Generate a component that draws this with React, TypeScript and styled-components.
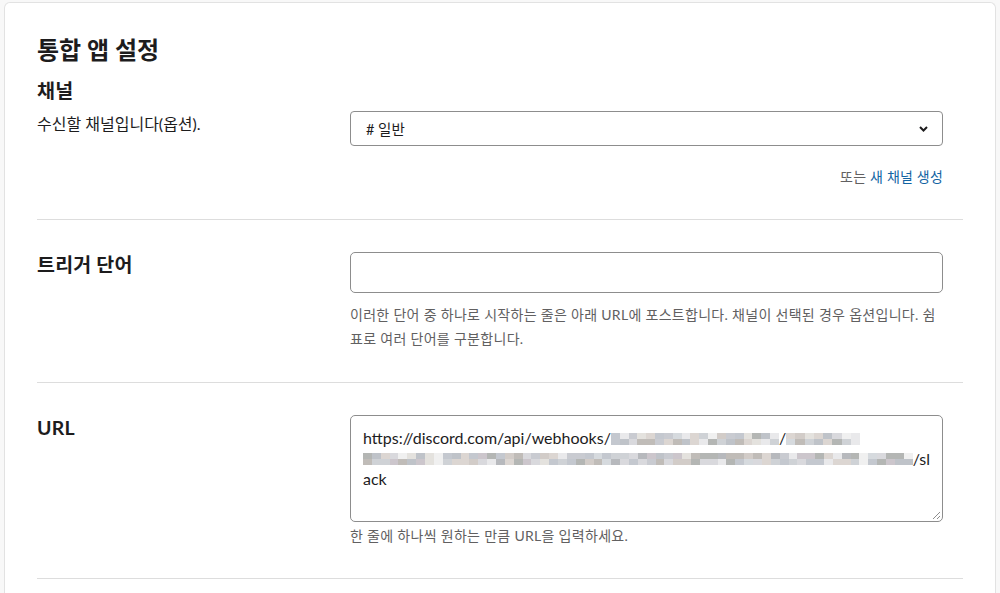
import React from "react";
import styled, { createGlobalStyle } from "styled-components";

const GlobalStyle = createGlobalStyle`
  body {
    margin: 0;
    background-color: #f8f8f8;
    font-family: Lato, "Noto Sans CJK KR", sans-serif;
    color: #1d1c1d;
  }
`;

const Card = styled.div`
  margin: 2px 4px 0;
  background-color: #ffffff;
  border: 1px solid #e2e2e2;
  border-bottom: none;
  border-radius: 6px 6px 0 0;
  padding: 31px 32px 40px;
  min-height: 600px;
`;

const Title = styled.h1`
  font-size: 24px;
  line-height: 32px;
  font-weight: 700;
  margin: 0 0 12px;
`;

const Label = styled.h2`
  font-size: 19.5px;
  line-height: 26px;
  font-weight: 700;
  margin: 0;
  letter-spacing: 0.2px;
`;

const Section = styled.section<{ $top?: number; $bottom?: number }>`
  padding: ${(p) => p.$top ?? 32}px 0 ${(p) => p.$bottom ?? 32}px;
  border-bottom: 1px solid #dddddd;
`;

const Row = styled.div`
  display: grid;
  grid-template-columns: 313px 593px;
`;

const Desc = styled.p`
  font-size: 16px;
  line-height: 22px;
  margin: 2px 0 0;
`;

const Field = styled.div`
  display: flex;
  flex-direction: column;
`;

const Select = styled.div`
  height: 35px;
  box-sizing: border-box;
  border: 1px solid #8d8d8d;
  border-radius: 4px;
  display: flex;
  align-items: center;
  justify-content: space-between;
  padding: 0 14px 0 15px;
  font-size: 14.5px;
`;

const Link = styled.div`
  margin-top: 21px;
  text-align: right;
  font-size: 14px;
  line-height: 20px;
  color: #616061;
  letter-spacing: 0.2px;

  & a {
    color: #1264a3;
    text-decoration: none;
  }
`;

const Input = styled.div`
  height: 41px;
  box-sizing: border-box;
  border: 1px solid #8d8d8d;
  border-radius: 5px;
`;

const Help = styled.p<{ $gap: number; $lh: number }>`
  margin: ${(p) => p.$gap}px 0 0;
  font-size: 14px;
  line-height: ${(p) => p.$lh}px;
  color: #616061;
  letter-spacing: 0.3px;
`;

const TextArea = styled.div`
  position: relative;
  height: 107px;
  box-sizing: border-box;
  border: 1px solid #8d8d8d;
  border-radius: 5px;
  padding: 12px 12px;
  font-size: 16px;
  line-height: 20.5px;
  color: #1d1c1d;
`;

const Line = styled.div`
  display: flex;
  align-items: center;
  white-space: nowrap;
  height: 20.5px;
`;

const Blur = styled.span<{ $cols: number }>`
  display: inline-grid;
  grid-template-columns: repeat(${(p) => p.$cols}, 1fr);
  grid-template-rows: 6px 6px;
  height: 12px;
  margin-top: 1px;
`;

const Grip = styled.svg`
  position: absolute;
  right: 1px;
  bottom: 1px;
`;

const palette = [
  "#d9d9dd", "#c9cbd1", "#bfc3c9", "#e4e2de", "#cfd2d6", "#b7b9bd",
  "#dcd6d2", "#c4c8cf", "#e9e9eb", "#d2ccc8", "#b4b6b4", "#f0f0f0",
  "#ccc6cc", "#d6dade", "#c0bcb8",
];

const Pixelated: React.FC<{ width: number; seed: number }> = ({ width, seed }) => {
  const cols = Math.round(width / 9);
  let s = seed;
  const cells = Array.from({ length: cols * 2 }, () => {
    s = (s * 9301 + 49297) % 233280;
    return palette[Math.floor((s / 233280) * palette.length)];
  });
  return (
    <Blur $cols={cols} style={{ width }}>
      {cells.map((c, i) => (
        <span key={i} style={{ backgroundColor: c }} />
      ))}
    </Blur>
  );
};

const App: React.FC = () => {
  return (
    <>
      <GlobalStyle />
      <Card>
        <Title>통합 앱 설정</Title>
        <Label>채널</Label>
        <Section $top={7}>
          <Row>
            <Desc>수신할 채널입니다(옵션).</Desc>
            <Field>
              <Select>
                <span># 일반</span>
                <svg width="9" height="6" viewBox="0 0 9 6">
                  <path d="M1 1l3.5 3.5L8 1" fill="none" stroke="#1d1c1d" strokeWidth="2" />
                </svg>
              </Select>
              <Link>
                또는 <a href="#">새 채널 생성</a>
              </Link>
            </Field>
          </Row>
        </Section>

        <Section $bottom={31}>
          <Row>
            <Label>트리거 단어</Label>
            <Field>
              <Input />
              <Help $gap={10} $lh={24}>
                이러한 단어 중 하나로 시작하는 줄은 아래 URL에 포스트합니다. 채널이 선택된 경우 옵션입니다. 쉼표로 여러 단어를 구분합니다.
              </Help>
            </Field>
          </Row>
        </Section>

        <Section>
          <Row>
            <Label>URL</Label>
            <Field>
              <TextArea>
                <Line>
                  https://discord.com/api/webhooks/
                  <Pixelated width={168} seed={7} />/
                  <Pixelated width={74} seed={31} />
                </Line>
                <Line>
                  <Pixelated width={555} seed={113} />/sl
                </Line>
                <Line>ack</Line>
                <Grip width="10" height="10" viewBox="0 0 10 10">
                  <path d="M9 2L2 9M9 6L6 9" stroke="#8d8d8d" strokeWidth="1" />
                </Grip>
              </TextArea>
              <Help $gap={4} $lh={20}>
                한 줄에 하나씩 원하는 만큼 URL을 입력하세요.
              </Help>
            </Field>
          </Row>
        </Section>
      </Card>
    </>
  );
};

export default App;
